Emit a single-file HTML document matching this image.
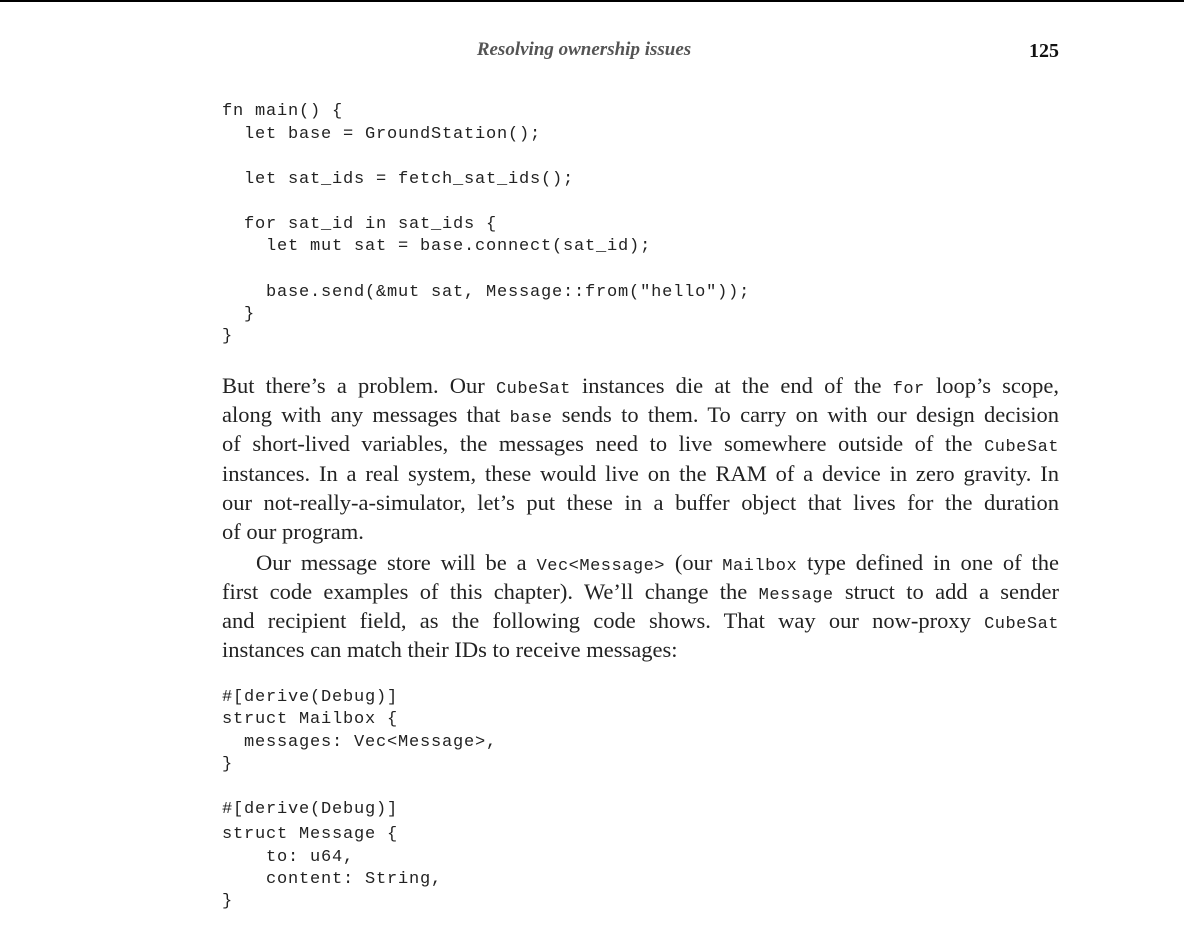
<!DOCTYPE html>
<html><head><meta charset="utf-8"><style>
html,body{margin:0;padding:0;background:#fff;width:1184px;height:928px;overflow:hidden;position:relative}
.top{position:absolute;left:0;top:0;width:1184px;height:2px;background:#000}
.hdr{position:absolute;top:39px;left:0;width:1184px;text-align:center;font:italic bold 19px "Liberation Serif",serif;color:#555;margin-left:-8px}
.pn{position:absolute;top:40px;left:1000px;width:59px;text-align:right;font:bold 20px "Liberation Serif",serif;color:#111}
.c{position:absolute;left:222px;font-family:"Liberation Mono",monospace;font-size:17px;letter-spacing:0.8px;line-height:22px;white-space:pre;color:#222}
.t{position:absolute;left:222px;width:837px;font-family:"Liberation Serif",serif;font-size:22.5px;line-height:29px;color:#222;text-align:justify;text-align-last:justify;white-space:nowrap}
.t.l{text-align-last:left}
.t code{font-family:"Liberation Mono",monospace;font-size:17px;letter-spacing:0.5px}
</style></head><body>
<div class="top"></div>
<div class="hdr">Resolving ownership issues</div>
<div class="pn">125</div>

<div class="c" style="top:101px">fn main() {</div>
<div class="c" style="top:124px">  let base = GroundStation();</div>
<div class="c" style="top:169px">  let sat_ids = fetch_sat_ids();</div>
<div class="c" style="top:214px">  for sat_id in sat_ids {</div>
<div class="c" style="top:236px">    let mut sat = base.connect(sat_id);</div>
<div class="c" style="top:282px">    base.send(&amp;mut sat, Message::from("hello"));</div>
<div class="c" style="top:304px">  }</div>
<div class="c" style="top:326px">}</div>

<div class="t" style="top:371px">But there’s a problem. Our <code>CubeSat</code> instances die at the end of the <code>for</code> loop’s scope,</div>
<div class="t" style="top:400px">along with any messages that <code>base</code> sends to them. To carry on with our design decision</div>
<div class="t" style="top:429px">of short-lived variables, the messages need to live somewhere outside of the <code>CubeSat</code></div>
<div class="t" style="top:459px">instances. In a real system, these would live on the RAM of a device in zero gravity. In</div>
<div class="t" style="top:488px">our not-really-a-simulator, let’s put these in a buffer object that lives for the duration</div>
<div class="t l" style="top:517px">of our program.</div>
<div class="t" style="top:548px;left:256px;width:803px">Our message store will be a <code>Vec&lt;Message&gt;</code> (our <code>Mailbox</code> type defined in one of the</div>
<div class="t" style="top:577px">first code examples of this chapter). We’ll change the <code>Message</code> struct to add a sender</div>
<div class="t" style="top:606px">and recipient field, as the following code shows. That way our now-proxy <code>CubeSat</code></div>
<div class="t l" style="top:635px">instances can match their IDs to receive messages:</div>

<div class="c" style="top:687px">#[derive(Debug)]</div>
<div class="c" style="top:709px">struct Mailbox {</div>
<div class="c" style="top:732px">  messages: Vec&lt;Message&gt;,</div>
<div class="c" style="top:754px">}</div>
<div class="c" style="top:799px">#[derive(Debug)]</div>
<div class="c" style="top:824px">struct Message {</div>
<div class="c" style="top:847px">    to: u64,</div>
<div class="c" style="top:869px">    content: String,</div>
<div class="c" style="top:891px">}</div>
</body></html>
